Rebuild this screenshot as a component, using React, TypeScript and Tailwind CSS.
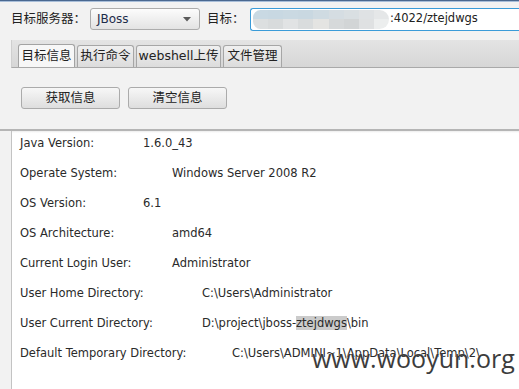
import React from 'react'

const CJK = "font-['DejaVu_Sans','Noto_Sans_CJK_SC',sans-serif]"

const ROWS: { label: string; value: React.ReactNode; labelW: string }[] = [
  { label: 'Java Version:', value: '1.6.0_43', labelW: 'w-[123px]' },
  { label: 'Operate System:', value: 'Windows Server 2008 R2', labelW: 'w-[152px]' },
  { label: 'OS Version:', value: '6.1', labelW: 'w-[123px]' },
  { label: 'OS Architecture:', value: 'amd64', labelW: 'w-[152px]' },
  { label: 'Current Login User:', value: 'Administrator', labelW: 'w-[152px]' },
  { label: 'User Home Directory:', value: 'C:\\Users\\Administrator', labelW: 'w-[182px]' },
  {
    label: 'User Current Directory:',
    value: (
      <>
        D:\project\jboss-<span className="bg-[#cbcbcb]">ztejdwgs</span>\bin
      </>
    ),
    labelW: 'w-[182px]',
  },
  {
    label: 'Default Temporary Directory:',
    value: 'C:\\Users\\ADMINI~1\\AppData\\Local\\Temp\\2\\',
    labelW: 'w-[212px]',
  },
]

const TABS = [
  { name: '目标信息', w: 'w-[57px]', active: true },
  { name: '执行命令', w: 'w-[57px]', active: false },
  { name: 'webshell上传', w: 'w-[85px]', active: false },
  { name: '文件管理', w: 'w-[59px]', active: false },
]

// mosaic blur over the host part of the url
const BLUR = [
  ['#c9d9e3', '#c8d8e2', '#cad9e2', '#c9d8e1', '#cfdbe2', '#d5dde2', '#d9dfe2', '#dfe2e4', '#e5e7e8'],
  ['#dcdfe0', '#d8dbdc', '#e1e3e4', '#d9dcdd', '#e4e4e2', '#d6d9da', '#d2d5d6', '#dfe1e2', '#eceeee'],
]

export default function App() {
  return (
    <div className={`relative h-[389px] w-[519px] overflow-hidden bg-[#f2f2f2] text-[#222] ${CJK}`}>
      {/* window top edge */}
      <div className="h-px bg-[#4a6890]" />
      <div className="h-px bg-[#a8bed9]" />

      {/* target row */}
      <div className="mt-[6px] flex h-[22px] items-center">
        <span className="ml-[11px] w-[79px] text-[12.5px]">目标服务器：</span>
        <div className="flex h-[22px] w-[110px] items-center justify-between rounded-[3px] border border-[#acacac] bg-gradient-to-b from-[#fcfcfc] to-[#e3e3e3] pl-[6px] pr-[8px]">
          <span className="text-[12px] text-[#1d2b4a]">JBoss</span>
          <svg width="8" height="5" viewBox="0 0 8 5">
            <path d="M0 0h8L4 4.5z" fill="#5a5a5a" />
          </svg>
        </div>
        <span className="ml-[7px] w-[43px] text-[12.5px]">目标：</span>
        <div className="flex h-[23px] flex-1 items-center rounded-l-[3px] border border-r-0 border-[#3a9bd8] bg-white pl-[2px]">
          <div className="grid h-[19px] w-[136px] grid-cols-9 overflow-hidden rounded-l-[8px] rounded-r-[10px]">
            {BLUR.flat().map((c, i) => (
              <div key={i} style={{ background: c }} />
            ))}
          </div>
          <span className="ml-[1px] text-[11.5px] text-[#222]">:4022/ztejdwgs</span>
        </div>
      </div>

      {/* tab strip */}
      <div className="ml-[11px] mt-[10px] flex h-[28px] items-end gap-[2px] border-b border-l border-[#a9a9a9] border-l-[#cfcfcf] bg-gradient-to-b from-[#e4e4e4] to-[#d6d6d6] pl-[6px]">
        {TABS.map((t) => (
          <div
            key={t.name}
            className={`flex items-center justify-center rounded-t-[3px] border border-b-0 text-[12.5px] ${t.w} ${
              t.active
                ? 'h-[23px] border-[#a3a3a3] bg-[#f7f7f7]'
                : 'h-[22px] border-[#a6a6a6] bg-gradient-to-b from-[#f0f0f0] to-[#dcdcdc]'
            }`}
          >
            {t.name}
          </div>
        ))}
      </div>

      {/* buttons */}
      <div className="ml-[21px] mt-[19px] flex gap-[8px]">
        <button className="h-[22px] w-[99px] rounded-[3px] border border-[#ababab] bg-gradient-to-b from-[#f7f7f7] to-[#dedede] text-[12.5px]">
          获取信息
        </button>
        <button className="h-[22px] w-[99px] rounded-[3px] border border-[#ababab] bg-gradient-to-b from-[#f7f7f7] to-[#dedede] text-[12.5px]">
          清空信息
        </button>
      </div>

      {/* info panel */}
      <div className="mt-[20px] h-[2px] bg-[#b5b5b5]" />
      <div className="ml-[11px] h-[260px] border-l border-[#c3c3c3] bg-white bg-gradient-to-b from-[#ececec] via-white to-white bg-[length:100%_4px] bg-no-repeat pl-[8px] pt-[4px]">
        {ROWS.map((r) => (
          <div key={r.label} className="flex h-[30px] items-start text-[11.5px] leading-[16px] text-[#2a2a2a]">
            <span className={`${r.labelW} shrink-0`}>{r.label}</span>
            <span className="whitespace-nowrap">{r.value}</span>
          </div>
        ))}
      </div>

      {/* watermark */}
      <div className="absolute left-[312px] top-[343px] font-['Open_Sans',sans-serif] text-[25px] leading-[30px] text-[#3c3c3c] [text-shadow:0_0_1px_#fff]">
        www.wooyun.org
      </div>
    </div>
  )
}
